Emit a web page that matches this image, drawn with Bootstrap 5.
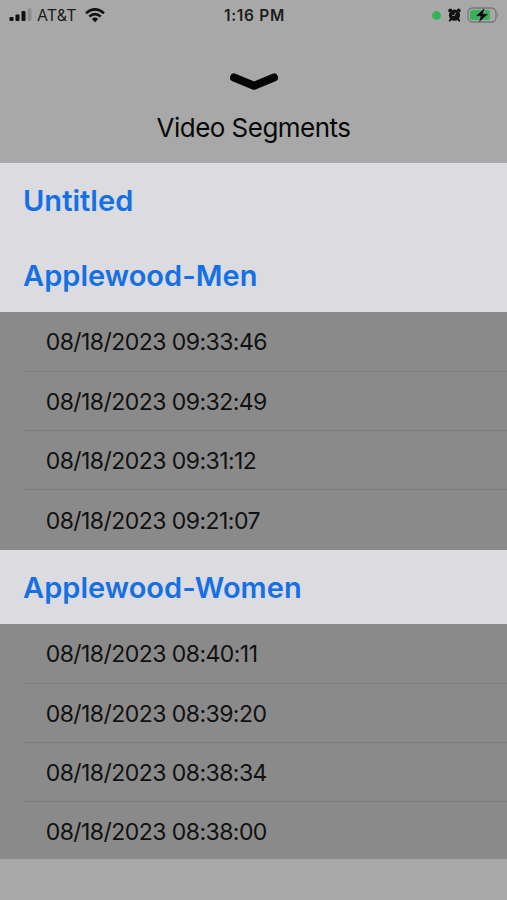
<!DOCTYPE html>
<html lang="en">
<head>
<meta charset="utf-8">
<meta name="viewport" content="width=device-width, initial-scale=1">
<title>Video Segments</title>
<link rel="stylesheet" href="https://cdn.jsdelivr.net/npm/bootstrap@5.3.0/dist/css/bootstrap.min.css">
<style>
body{background:#a8a8a8;font-family:Inter,"Liberation Sans",sans-serif;color:#111;overflow:hidden;height:900px}
svg{display:block;flex:none}
.status{height:30px;padding:0 7px 2px 9px;line-height:28px;color:#1c1c1c}
.carrier{font-size:16px;letter-spacing:.1px}
.clock{font-size:15.5px;font-weight:600;letter-spacing:.7px;padding-top:2px}
.alarm{margin:0 6px 0 7px}
.sheet-head{height:132.6px;padding-top:43px}
.sheet-title{font-size:26px;line-height:32px;font-weight:400;margin-top:21px;letter-spacing:-.53px;color:#080808}
.group-title{height:74.8px;padding:2px 23px 0;background:#dcdce0;color:#1470e4;font-size:29px;line-height:36px;font-weight:600;letter-spacing:.03px}
.segments{background:#8a8a8a}
.segment{height:59.35px;margin-left:22px;padding:2.4px 0 0 23.7px;border:0;border-bottom:1px solid #7d7d7d;background:transparent;color:#111;font-size:23px;letter-spacing:-.55px}
.segment:last-child{border-bottom:0}
.segments-end .segment:last-child{height:57px;padding-top:3.5px}
</style>
<script src="https://cdn.jsdelivr.net/npm/bootstrap@5.3.0/dist/js/bootstrap.bundle.min.js"></script>
</head>
<body>
<header class="status row g-0 align-items-center">
  <div class="col d-flex align-items-center">
    <svg width="24" height="14" viewBox="0 0 24 14"><g fill="#111"><rect x="0.5" y="9" width="4" height="4" rx="1"/><rect x="6.5" y="6.5" width="4" height="6.5" rx="1"/><rect x="12.5" y="3" width="4" height="10" rx="1"/></g><rect x="18.5" y="0.5" width="4" height="12.5" rx="1" fill="#8b8b8b"/></svg>
    <span class="ms-1 carrier">AT&amp;T</span>
    <svg class="ms-2" width="20" height="15" viewBox="0 0 20 15"><g fill="none" stroke="#111" stroke-width="2.6"><path d="M1 5.2Q10-2.4 19 5.2"/><path d="M4.3 8.6Q10 3.8 15.7 8.6"/></g><path d="M6.8 10.9Q10 8.2 13.2 10.9L10 14.2Z" fill="#111"/></svg>
  </div>
  <div class="col-auto clock">1:16 PM</div>
  <div class="col d-flex align-items-center justify-content-end">
    <svg width="9" height="9" viewBox="0 0 9 9"><circle cx="4.5" cy="4.5" r="4.4" fill="#2fb457"/></svg>
    <svg class="alarm" width="13" height="14" viewBox="0 0 13 14"><circle cx="6.5" cy="7.2" r="5.6" fill="#111"/><g stroke="#111" stroke-width="2.8" stroke-linecap="round"><path d="M1.6 2.7L2.6 1.9M11.4 2.7L10.4 1.9"/></g><path d="M2.8 11L1.9 12.6M10.2 11L11.1 12.6" stroke="#111" stroke-width="2" stroke-linecap="round"/><path d="M7.6 4.6L6.5 7.4H4.2" fill="none" stroke="#a8a8a8" stroke-width=".9"/></svg>
    <svg width="33" height="18" viewBox="0 0 33 18"><rect x="1" y="2" width="28" height="14" rx="4.5" fill="none" stroke="#777" stroke-width="1.3"/><rect x="3" y="4" width="20" height="10" rx="2.5" fill="#32b557"/><path d="M30.5 6.7Q32.4 9 30.5 11.3Z" fill="#777"/><path d="M18 1.4L8.3 10.2H13.4L11.6 16.8L21.8 7.8H16.2Z" fill="#080808" stroke="#a8a8a8" stroke-width=".5"/></svg>
  </div>
</header>
<section class="sheet-head d-flex flex-column align-items-center">
  <svg width="50" height="18" viewBox="0 0 50 18"><path d="M5 4.5L25 12.8L45 4.5" fill="none" stroke="#050505" stroke-width="8" stroke-linecap="round" stroke-linejoin="round"/></svg>
  <h1 class="sheet-title mb-0">Video Segments</h1>
</section>
<main>
  <h2 class="group-title d-flex align-items-center mb-0">Untitled</h2>
  <h2 class="group-title d-flex align-items-center mb-0">Applewood-Men</h2>
  <ul class="segments list-group list-group-flush">
    <li class="segment list-group-item d-flex align-items-center">08/18/2023 09:33:46</li>
    <li class="segment list-group-item d-flex align-items-center">08/18/2023 09:32:49</li>
    <li class="segment list-group-item d-flex align-items-center">08/18/2023 09:31:12</li>
    <li class="segment list-group-item d-flex align-items-center">08/18/2023 09:21:07</li>
  </ul>
  <h2 class="group-title d-flex align-items-center mb-0">Applewood-Women</h2>
  <ul class="segments segments-end list-group list-group-flush">
    <li class="segment list-group-item d-flex align-items-center">08/18/2023 08:40:11</li>
    <li class="segment list-group-item d-flex align-items-center">08/18/2023 08:39:20</li>
    <li class="segment list-group-item d-flex align-items-center">08/18/2023 08:38:34</li>
    <li class="segment list-group-item d-flex align-items-center">08/18/2023 08:38:00</li>
  </ul>
</main>
</body>
</html>
